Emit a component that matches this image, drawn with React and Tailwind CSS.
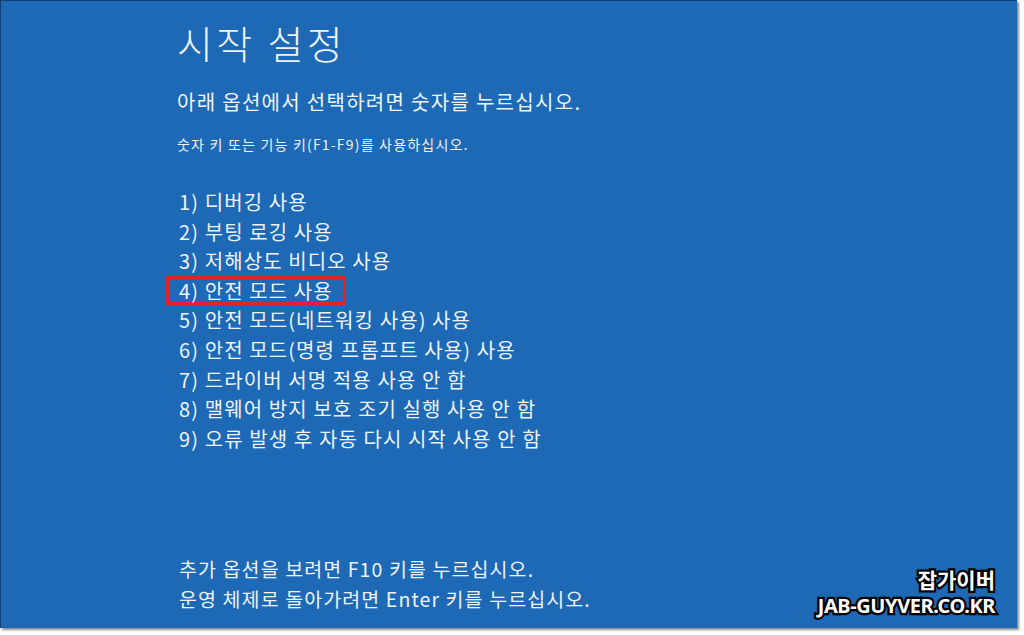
const items = [
  '1) 디버깅 사용',
  '2) 부팅 로깅 사용',
  '3) 저해상도 비디오 사용',
  '4) 안전 모드 사용',
  '5) 안전 모드(네트워킹 사용) 사용',
  '6) 안전 모드(명령 프롬프트 사용) 사용',
  '7) 드라이버 서명 적용 사용 안 함',
  '8) 맬웨어 방지 보호 조기 실행 사용 안 함',
  '9) 오류 발생 후 자동 다시 시작 사용 안 함',
]

const ko = "font-['Noto_Sans_CJK_KR','Noto_Sans',sans-serif]"

export default function App() {
  return (
    <div className="w-[1024px] h-[635px] bg-white overflow-hidden">
      <div className={`relative w-[1017px] h-[628px] bg-[#1d69b5] border-l border-t border-[#123f78] shadow-[2px_2px_2px_rgba(0,0,0,0.45)] flex flex-col pl-[176px] pt-[13px] pb-[14px] text-[#eef3f9] ${ko}`}>
        {/* title */}
        <h1 className="text-[39px] leading-[56px] font-light tracking-[3.4px]">시작 설정</h1>
        <p className="mt-[17px] text-[20px] leading-[30px] tracking-[1.3px]">아래 옵션에서 선택하려면 숫자를 누르십시오.</p>
        <p className="mt-[17px] text-[14px] leading-[20px] tracking-[1.2px]">숫자 키 또는 기능 키(F1-F9)를 사용하십시오.</p>

        {/* options */}
        <ul className="mt-[33px] pl-[2px] text-[20px] tracking-[1.1px]">
          {items.map((t, i) =>
            i === 3 ? (
              <li key={t} className="h-[29.6px]">
                <span className="inline-block -ml-[13px] pl-[10px] pr-[10px] border-[3px] border-[#e2222c] leading-[23.6px]">
                  {t}
                </span>
              </li>
            ) : (
              <li key={t} className="leading-[29.6px]">{t}</li>
            )
          )}
        </ul>

        {/* bottom hints */}
        <div className="mt-auto pl-[2px] text-[19.5px] leading-[30px] tracking-[1.1px]">
          <p>추가 옵션을 보려면 F10 키를 누르십시오.</p>
          <p>운영 체제로 돌아가려면 Enter 키를 누르십시오.</p>
        </div>

        {/* watermark */}
        <div className="absolute right-[22px] bottom-[10px] flex flex-col items-end gap-[1px] font-bold text-white [paint-order:stroke_fill] [-webkit-text-stroke:4.5px_#000]">
          <span className="text-[21px] leading-[25px]">잡가이버</span>
          <span className="font-['Noto_Sans',sans-serif] text-[20px] leading-[25px] tracking-[-0.4px]">JAB-GUYVER.CO.KR</span>
        </div>
      </div>
    </div>
  )
}
